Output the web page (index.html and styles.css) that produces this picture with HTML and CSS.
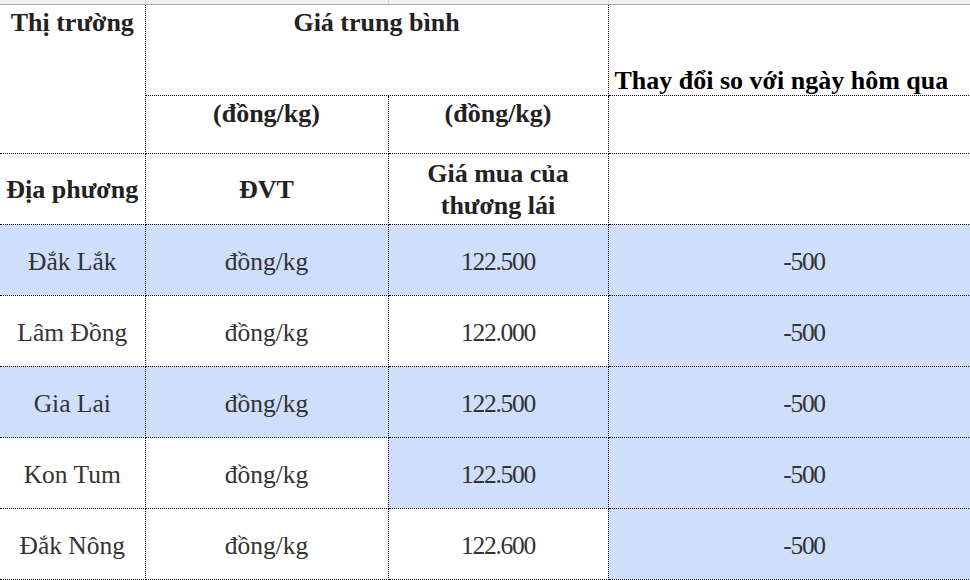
FILE: index.html
```html
<!DOCTYPE html>
<html lang="vi">
<head>
<meta charset="utf-8">
<title>Giá cà phê</title>
<link rel="stylesheet" href="styles.css">
</head>
<body>
<div class="strip">
  <div class="strip-cell c1"></div>
  <div class="strip-cell c2"></div>
  <div class="strip-cell c3"></div>
  <div class="strip-cell c4"></div>
</div>
<table class="price">
  <colgroup>
    <col class="w1"><col class="w2"><col class="w3"><col class="w4">
  </colgroup>
  <tr class="r1">
    <th rowspan="2" class="top">Thị trường</th>
    <th colspan="2" class="top">Giá trung bình</th>
    <th class="bottom left">Thay đổi so với ngày hôm qua</th>
  </tr>
  <tr class="r2">
    <th class="top">(đồng/kg)</th>
    <th class="top">(đồng/kg)</th>
    <th></th>
  </tr>
  <tr class="r3">
    <th>Địa phương</th>
    <th>ĐVT</th>
    <th>Giá mua của<br>thương lái</th>
    <th></th>
  </tr>
  <tr class="row">
    <td class="hl">Đắk Lắk</td>
    <td class="hl">đồng/kg</td>
    <td class="hl num">122.500</td>
    <td class="hl num">-500</td>
  </tr>
  <tr class="row">
    <td>Lâm Đồng</td>
    <td>đồng/kg</td>
    <td class="num">122.000</td>
    <td class="hl num">-500</td>
  </tr>
  <tr class="row">
    <td class="hl">Gia Lai</td>
    <td class="hl">đồng/kg</td>
    <td class="hl num">122.500</td>
    <td class="hl num">-500</td>
  </tr>
  <tr class="row">
    <td>Kon Tum</td>
    <td>đồng/kg</td>
    <td class="hl num">122.500</td>
    <td class="hl num">-500</td>
  </tr>
  <tr class="row">
    <td>Đắk Nông</td>
    <td>đồng/kg</td>
    <td class="num">122.600</td>
    <td class="hl num">-500</td>
  </tr>
</table>
</body>
</html>
```
FILE: styles.css
```css
html, body {
  margin: 0;
  padding: 0;
  background: #ffffff;
}
body {
  width: 970px;
  overflow: hidden;
  font-family: "Liberation Serif", "DejaVu Serif", serif;
}
.strip {
  display: flex;
  height: 4px;
  background: #f0f0f0;
  border-bottom: 1px solid #a8a8a8;
}
.strip-cell {
  height: 4px;
  border-right: 1px solid #d0d0d0;
}
.strip-cell.c1 { width: 145px; }
.strip-cell.c2 { width: 242px; }
.strip-cell.c3 { width: 219px; }
.strip-cell.c4 { flex: 1; border-right: none; }

.price {
  border-collapse: collapse;
  table-layout: fixed;
  width: 1000px;
}
.w1 { width: 145px; }
.w2 { width: 243px; }
.w3 { width: 220px; }
.w4 { width: 392px; }

.price th, .price td {
  font-family: "Liberation Serif", "DejaVu Serif", serif;
  border: 1px dotted #000;
  padding: 0 2px;
  text-align: center;
  vertical-align: middle;
  line-height: 32px;
  white-space: nowrap;
}
.price tr > :first-child { border-left: none; }
.price tr.r1 > * { border-top: none; }

.price th {
  font-size: 26px;
  font-weight: bold;
  color: #222;
}
.price tr.r3 th {
  padding-top: 3px;
}
.price td {
  font-size: 25.5px;
  color: #333;
  font-weight: normal;
  padding-top: 5px;
}
.price td.num {
  letter-spacing: -1.3px;
}
.price th.top {
  vertical-align: top;
  padding-top: 2px;
}
.price th.bottom {
  vertical-align: bottom;
  padding-bottom: 0;
  line-height: 28px;
}
.price th.left {
  text-align: left;
  padding-left: 6px;
  color: #000;
}
.r1 { height: 90px; }
.r2 { height: 58px; }
.r3 { height: 71px; }
.row { height: 71px; }
.hl { background: #cfdffb; }
```
